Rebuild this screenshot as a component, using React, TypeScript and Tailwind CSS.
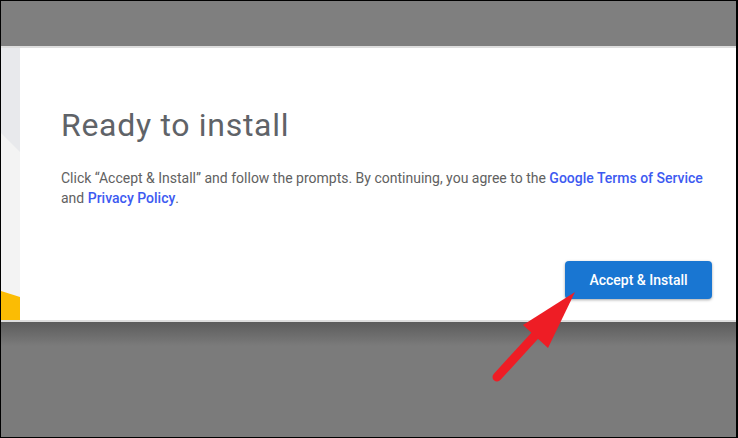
const LeftStrip = () => (
  <svg width="19" height="272" viewBox="0 0 19 272" className="block">
    <rect x="0" y="0" width="19" height="272" fill="#f3f3f3" />
    <polygon points="0,0 19,0 19,104 0,85" fill="#e8e9ec" />
    <polygon points="0,243 19,249 19,272 0,272" fill="#fbbc04" />
  </svg>
);

const Arrow = () => (
  <svg
    width="738"
    height="438"
    viewBox="0 0 738 438"
    className="absolute -left-px -top-px pointer-events-none"
  >
    <line x1="497" y1="377" x2="540" y2="330" stroke="#ee1d25" strokeWidth="9" strokeLinecap="round" />
    <polygon points="575,292 523,325 548,348" fill="#ee1d25" />
  </svg>
);

export default function App() {
  return (
    <div
      className="relative w-[738px] h-[438px] overflow-hidden border border-r-2 border-black bg-[#7b7b7b]"
      style={{ fontFamily: 'Roboto, "Liberation Sans", sans-serif' }}
    >
      <div className="h-[45px] bg-[#7f7f7f]" />

      <div className="flex h-[276px] bg-white border-y-2 border-[#dedede]">
        <div className="w-[19px] shrink-0">
          <LeftStrip />
        </div>
        <div className="flex-1 flex flex-col pl-[41px] pr-[24px] pt-[59px] pb-[21px]">
          <h1 className="text-[32px] leading-[36px] tracking-[0.7px] text-[#5f6368] font-normal">Ready to install</h1>
          <p className="mt-[25px] text-[14px] leading-[20px] text-[#616161]">
            Click “Accept &amp; Install” and follow the prompts. By continuing, you agree to the{' '}
            <a className="text-[#3d5af1] font-medium">Google Terms of Service</a> and{' '}
            <a className="text-[#3d5af1] font-medium">Privacy Policy</a>.
          </p>
          <div className="mt-auto flex justify-end">
            <button className="w-[147px] h-[38px] rounded-[4px] bg-[#1976d2] text-white text-[14px] font-medium shadow-[0_1px_3px_rgba(0,0,0,0.35)]">
              Accept &amp; Install
            </button>
          </div>
        </div>
      </div>

      <div className="h-[24px] bg-gradient-to-b from-[#5c5c5c] to-[#7b7b7b]" />

      <Arrow />
    </div>
  );
}
